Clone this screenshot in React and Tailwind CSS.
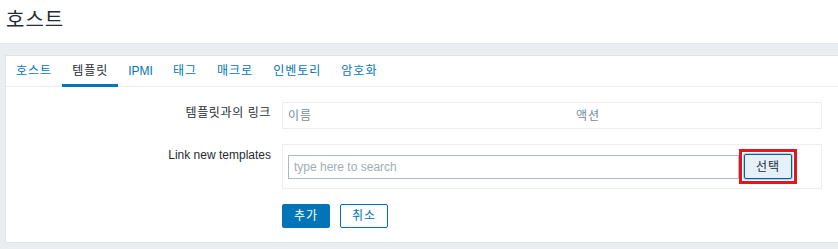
const tabs = ['호스트', '템플릿', 'IPMI', '태그', '매크로', '인벤토리', '암호화'];

export default function App() {
  const active = '템플릿';

  return (
    <div className="w-[838px] h-[249px] overflow-hidden bg-[#ebeef0] font-['Liberation_Sans','Noto_Sans_CJK_KR',sans-serif] text-[12px] text-[#1f2c33]">
      {/* Page header */}
      <div className="h-[44px] bg-white border-b border-[#dfe4e7] pl-[6px] pt-[8px]">
        <h1 className="text-[20px] leading-[24px] font-normal tracking-[1px] text-[#1f2c33]">호스트</h1>
      </div>

      <div className="pt-[11px] pl-[5px]">
        <div className="w-[850px] bg-white border border-[#dfe4e7] pb-[14px]">
          {/* Tabs */}
          <div className="flex border-b border-[#ebeef0]">
            {tabs.map((t) => (
              <div
                key={t}
                className={`h-[31px] px-[10px] pt-[2px] flex items-center -mb-px border-b-[3px] ${
                  t === 'IPMI' ? '' : 'tracking-[1px]'
                } ${t === active ? 'border-[#0275b8] text-[#1f2c33]' : 'border-transparent text-[#0275b8]'}`}
              >
                {t}
              </div>
            ))}
          </div>

          {/* Form */}
          <div className="pt-[15px] flex flex-col gap-[15px]">
            <div className="flex">
              <div className="w-[265px] text-right leading-[14px] pt-[4px] tracking-[0.6px]">템플릿과의 링크</div>
              <div className="ml-[11px] w-[540px] h-[27px] border border-[#ebeef0] grid grid-cols-[288px_1fr] items-center text-[#768d99] tracking-[1px]">
                <div className="pl-[5px]">이름</div>
                <div className="pl-[5px]">액션</div>
              </div>
            </div>

            <div className="flex">
              <div className="w-[265px] text-right leading-[14px] pt-[4px]">Link new templates</div>
              <div className="ml-[11px] w-[540px] h-[45px] border border-[#ebeef0] pl-[5px] pr-[24px] pt-[10px] pb-[9px] flex items-start">
                <input
                  type="text"
                  placeholder="type here to search"
                  className="flex-1 min-w-0 h-[24px] border border-[#acbbc2] px-[5px] text-[12px] placeholder-[#a3adb3] outline-none"
                />
                <span className="-mt-[6px] border-[3px] border-[#e3161d] p-[2px] flex">
                  <button className="w-[48px] h-[25px] bg-[#e5f0fa] border border-[#0f5e96] rounded-[2px] shadow-[0_0_0_1px_#a9d2f0] text-[#1f2c33] text-[12px] tracking-[1px]">
                    선택
                  </button>
                </span>
              </div>
            </div>

            <div className="flex pl-[276px] gap-[10px]">
              <button className="w-[48px] h-[24px] bg-[#0275b8] border border-[#0275b8] rounded-[2px] text-white text-[12px] tracking-[1px]">
                추가
              </button>
              <button className="w-[48px] h-[24px] bg-white border border-[#0275b8] rounded-[2px] text-[#0275b8] text-[12px] tracking-[1px]">
                취소
              </button>
            </div>
          </div>
        </div>
      </div>
    </div>
  );
}
